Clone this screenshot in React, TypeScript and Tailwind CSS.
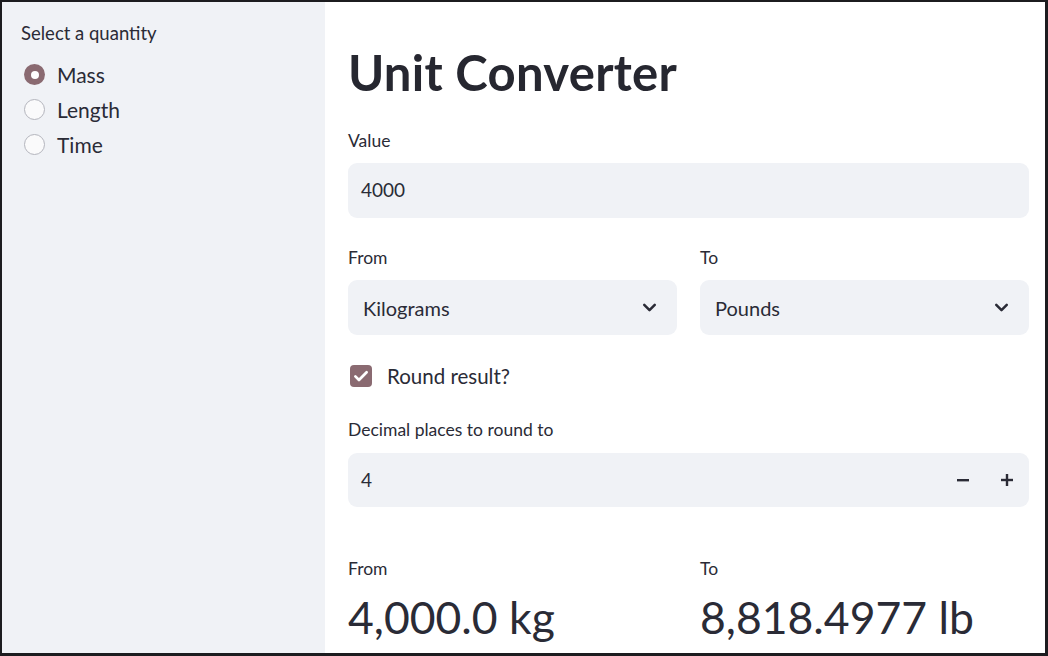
import React, { useState } from "react";
import { ChevronDown } from "lucide-react";

const font = { fontFamily: "Lato, 'Noto Sans', sans-serif" };

function Radio({ label, checked, onClick }: { label: string; checked: boolean; onClick: () => void }) {
  return (
    <div className="flex h-[35px] items-center cursor-pointer" onClick={onClick}>
      {checked ? (
        <span className="flex h-[21px] w-[21px] items-center justify-center rounded-full bg-[#8a6a71]">
          <span className="h-[8px] w-[8px] rounded-full bg-white" />
        </span>
      ) : (
        <span className="h-[21px] w-[21px] rounded-full border border-[#b4b5bd] bg-[#fafafb]" />
      )}
      <span className="ml-[12px] text-[21px] text-[#2a2b36]">{label}</span>
    </div>
  );
}

function Select({ value }: { value: string }) {
  return (
    <div className="flex h-[55px] items-center justify-between rounded-[9px] bg-[#f0f2f6] pl-[15px] pr-[17px]">
      <span className="text-[20px] text-[#2a2b36]">{value}</span>
      <ChevronDown size={21} strokeWidth={2.9} className="text-[#2a2b36]" />
    </div>
  );
}

export default function App() {
  const [qty, setQty] = useState("Mass");
  const [round, setRound] = useState(true);

  return (
    <div
      style={font}
      className="flex h-[656px] w-[1048px] border-b-[3px] border-l-2 border-r-[3px] border-t-2 border-[#1c1c1f] bg-white"
    >
      {/* sidebar */}
      <div className="w-[323px] shrink-0 bg-[#f0f2f6] pl-[19px] pt-[21px]">
        <div className="flex h-[22px] items-center text-[18.5px] text-[#2a2b36]">Select a quantity</div>
        <div className="mt-[12px] pl-[3px]">
          {["Mass", "Length", "Time"].map((q) => (
            <Radio key={q} label={q} checked={qty === q} onClick={() => setQty(q)} />
          ))}
        </div>
      </div>

      {/* main */}
      <div className="flex w-[681px] flex-col pl-[23px] pt-[41px] box-content">
        <div className="flex h-[60px] items-center text-[49px] font-bold tracking-[0.3px] text-[#262730]">Unit Converter</div>

        <div className="mt-[27px] flex h-[22px] items-center text-[17.5px] text-[#2a2b36]">Value</div>
        <div className="mt-[11px] flex h-[55px] items-center rounded-[9px] bg-[#f0f2f6] px-[13px] text-[19px] text-[#2a2b36]">
          4000
        </div>

        <div className="mt-[29px] grid grid-cols-2 gap-x-[23px]">
          <div className="flex h-[22px] items-center text-[17.5px] text-[#2a2b36]">From</div>
          <div className="flex h-[22px] items-center text-[17.5px] text-[#2a2b36]">To</div>
          <div className="mt-[11px]">
            <Select value="Kilograms" />
          </div>
          <div className="mt-[11px]">
            <Select value="Pounds" />
          </div>
        </div>

        <div className="mt-[30px] flex h-[22px] items-center cursor-pointer" onClick={() => setRound(!round)}>
          <span
            className={
              round
                ? "ml-[2px] flex h-[22px] w-[22px] items-center justify-center rounded-[4px] bg-[#8a6a71]"
                : "ml-[2px] h-[22px] w-[22px] rounded-[4px] border border-[#b4b5bd] bg-white"
            }
          >
            {round && (
              <svg width="18" height="18" viewBox="0 0 24 24" fill="none" stroke="white" strokeWidth="3.6" strokeLinecap="round" strokeLinejoin="round">
                <path d="M4.5 12.5l4.8 4.8L19.5 7" />
              </svg>
            )}
          </span>
          <span className="ml-[15px] text-[20.5px] text-[#2a2b36]">Round result?</span>
        </div>

        <div className="mt-[32px] flex h-[22px] items-center text-[17.5px] text-[#2a2b36]">Decimal places to round to</div>
        <div className="mt-[12px] flex h-[54px] items-center justify-between rounded-[9px] bg-[#f0f2f6] pl-[13px]">
          <span className="text-[19px] text-[#2a2b36]">4</span>
          <div className="flex h-full items-center">
            <button className="flex h-full w-[44px] items-center justify-center">
              <svg width="12" height="12" viewBox="0 0 12 12">
                <rect x="0" y="5" width="12" height="2.4" fill="#2a2b36" />
              </svg>
            </button>
            <button className="flex h-full w-[44px] items-center justify-center">
              <svg width="12" height="12" viewBox="0 0 12 12">
                <rect x="0" y="4.8" width="12" height="2.4" fill="#2a2b36" />
                <rect x="4.8" y="0" width="2.4" height="12" fill="#2a2b36" />
              </svg>
            </button>
          </div>
        </div>

        <div className="mt-[51px] grid grid-cols-2 gap-x-[23px]">
          <div className="flex h-[22px] items-center text-[17.5px] text-[#2a2b36]">From</div>
          <div className="flex h-[22px] items-center text-[17.5px] text-[#2a2b36]">To</div>
          <div className="mt-[12px] flex h-[50px] items-center text-[44.5px] text-[#2a2b36]">4,000.0 kg</div>
          <div className="mt-[12px] flex h-[50px] items-center text-[44.5px] text-[#2a2b36]">8,818.4977 lb</div>
        </div>
      </div>
    </div>
  );
}
